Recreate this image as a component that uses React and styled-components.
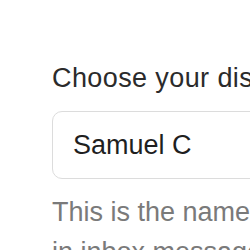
import styled, { createGlobalStyle } from "styled-components";

const GlobalStyle = createGlobalStyle`
  body {
    margin: 0;
    background: #ffffff;
    font-family: "Liberation Sans", Arial, sans-serif;
  }
`;

const Container = styled.div`
  width: 640px;
  padding: 59px 0 0 52px;
  display: flex;
  flex-direction: column;
`;

const Label = styled.label`
  font-size: 27px;
  line-height: 38px;
  letter-spacing: 0.4px;
  color: #2b2b2b;
  white-space: nowrap;
`;

const Input = styled.input`
  margin-top: 14px;
  height: 68px;
  box-sizing: border-box;
  width: 440px;
  padding: 0 20px;
  border: 1.5px solid #dcdcdc;
  border-radius: 10px;
  font-family: "Liberation Sans", Arial, sans-serif;
  font-size: 27px;
  color: #1f1f1f;
  outline: none;
`;

const Help = styled.p`
  margin: 13px 0 0;
  font-size: 27px;
  line-height: 40px;
  color: #7a7a7a;
  white-space: nowrap;
`;

const App = () => {
  return (
    <Container>
      <GlobalStyle />
      <Label>Choose your display name</Label>
      <Input defaultValue="Samuel C" />
      <Help>
        This is the name other people will see
        <br />
        in inbox messages and on your profile.
      </Help>
    </Container>
  );
};

export default App;
